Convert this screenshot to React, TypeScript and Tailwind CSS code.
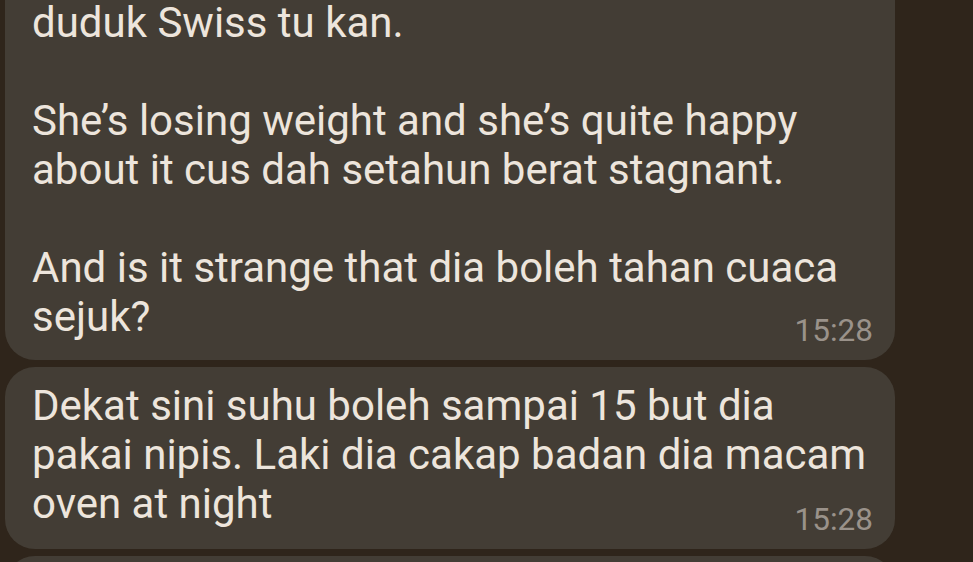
const messages = [
  {
    id: 1,
    lines: [
      'duduk Swiss tu kan.',
      '',
      'She’s losing weight and she’s quite happy',
      'about it cus dah setahun berat stagnant.',
      '',
      'And is it strange that dia boleh tahan cuaca',
      'sejuk?',
    ],
    time: '15:28',
    cut: true,
  },
  {
    id: 2,
    lines: [
      'Dekat sini suhu boleh sampai 15 but dia',
      'pakai nipis. Laki dia cakap badan dia macam',
      'oven at night',
    ],
    time: '15:28',
    cut: false,
  },
];

const Bubble = ({ lines, time, cut }: { lines: string[]; time: string; cut: boolean }) => (
  <div
    className={`relative w-[890px] bg-[#433d35] pl-[27px] pr-[22px] ${
      cut ? 'rounded-b-[30px] pt-0 pb-[19px]' : 'rounded-[30px] pt-[14px] pb-[21px]'
    }`}
  >
    <div className="text-[#ede5dc] text-[42px] leading-[49px]">
      {lines.map((line, i) => (
        <div
          key={i}
          className={`whitespace-pre ${cut && i === 0 ? 'h-[47px] leading-[45px]' : 'h-[49px]'}`}
        >
          {line}
        </div>
      ))}
    </div>
    <span className="absolute right-[22px] bottom-[11px] text-[#9a928a] text-[31.5px] leading-[36px]">
      {time}
    </span>
  </div>
);

export default function App() {
  return (
    <div
      className="w-[973px] h-[562px] overflow-hidden bg-[#2f251b]"
      style={{ fontFamily: 'Roboto, "Noto Sans", sans-serif' }}
    >
      <div className="flex flex-col gap-[7px] pl-[5px]">
        {messages.map((m) => (
          <Bubble key={m.id} lines={m.lines} time={m.time} cut={m.cut} />
        ))}
        <div className="w-[890px] h-[40px] rounded-t-[30px] bg-[#433d35]" />
      </div>
    </div>
  );
}
